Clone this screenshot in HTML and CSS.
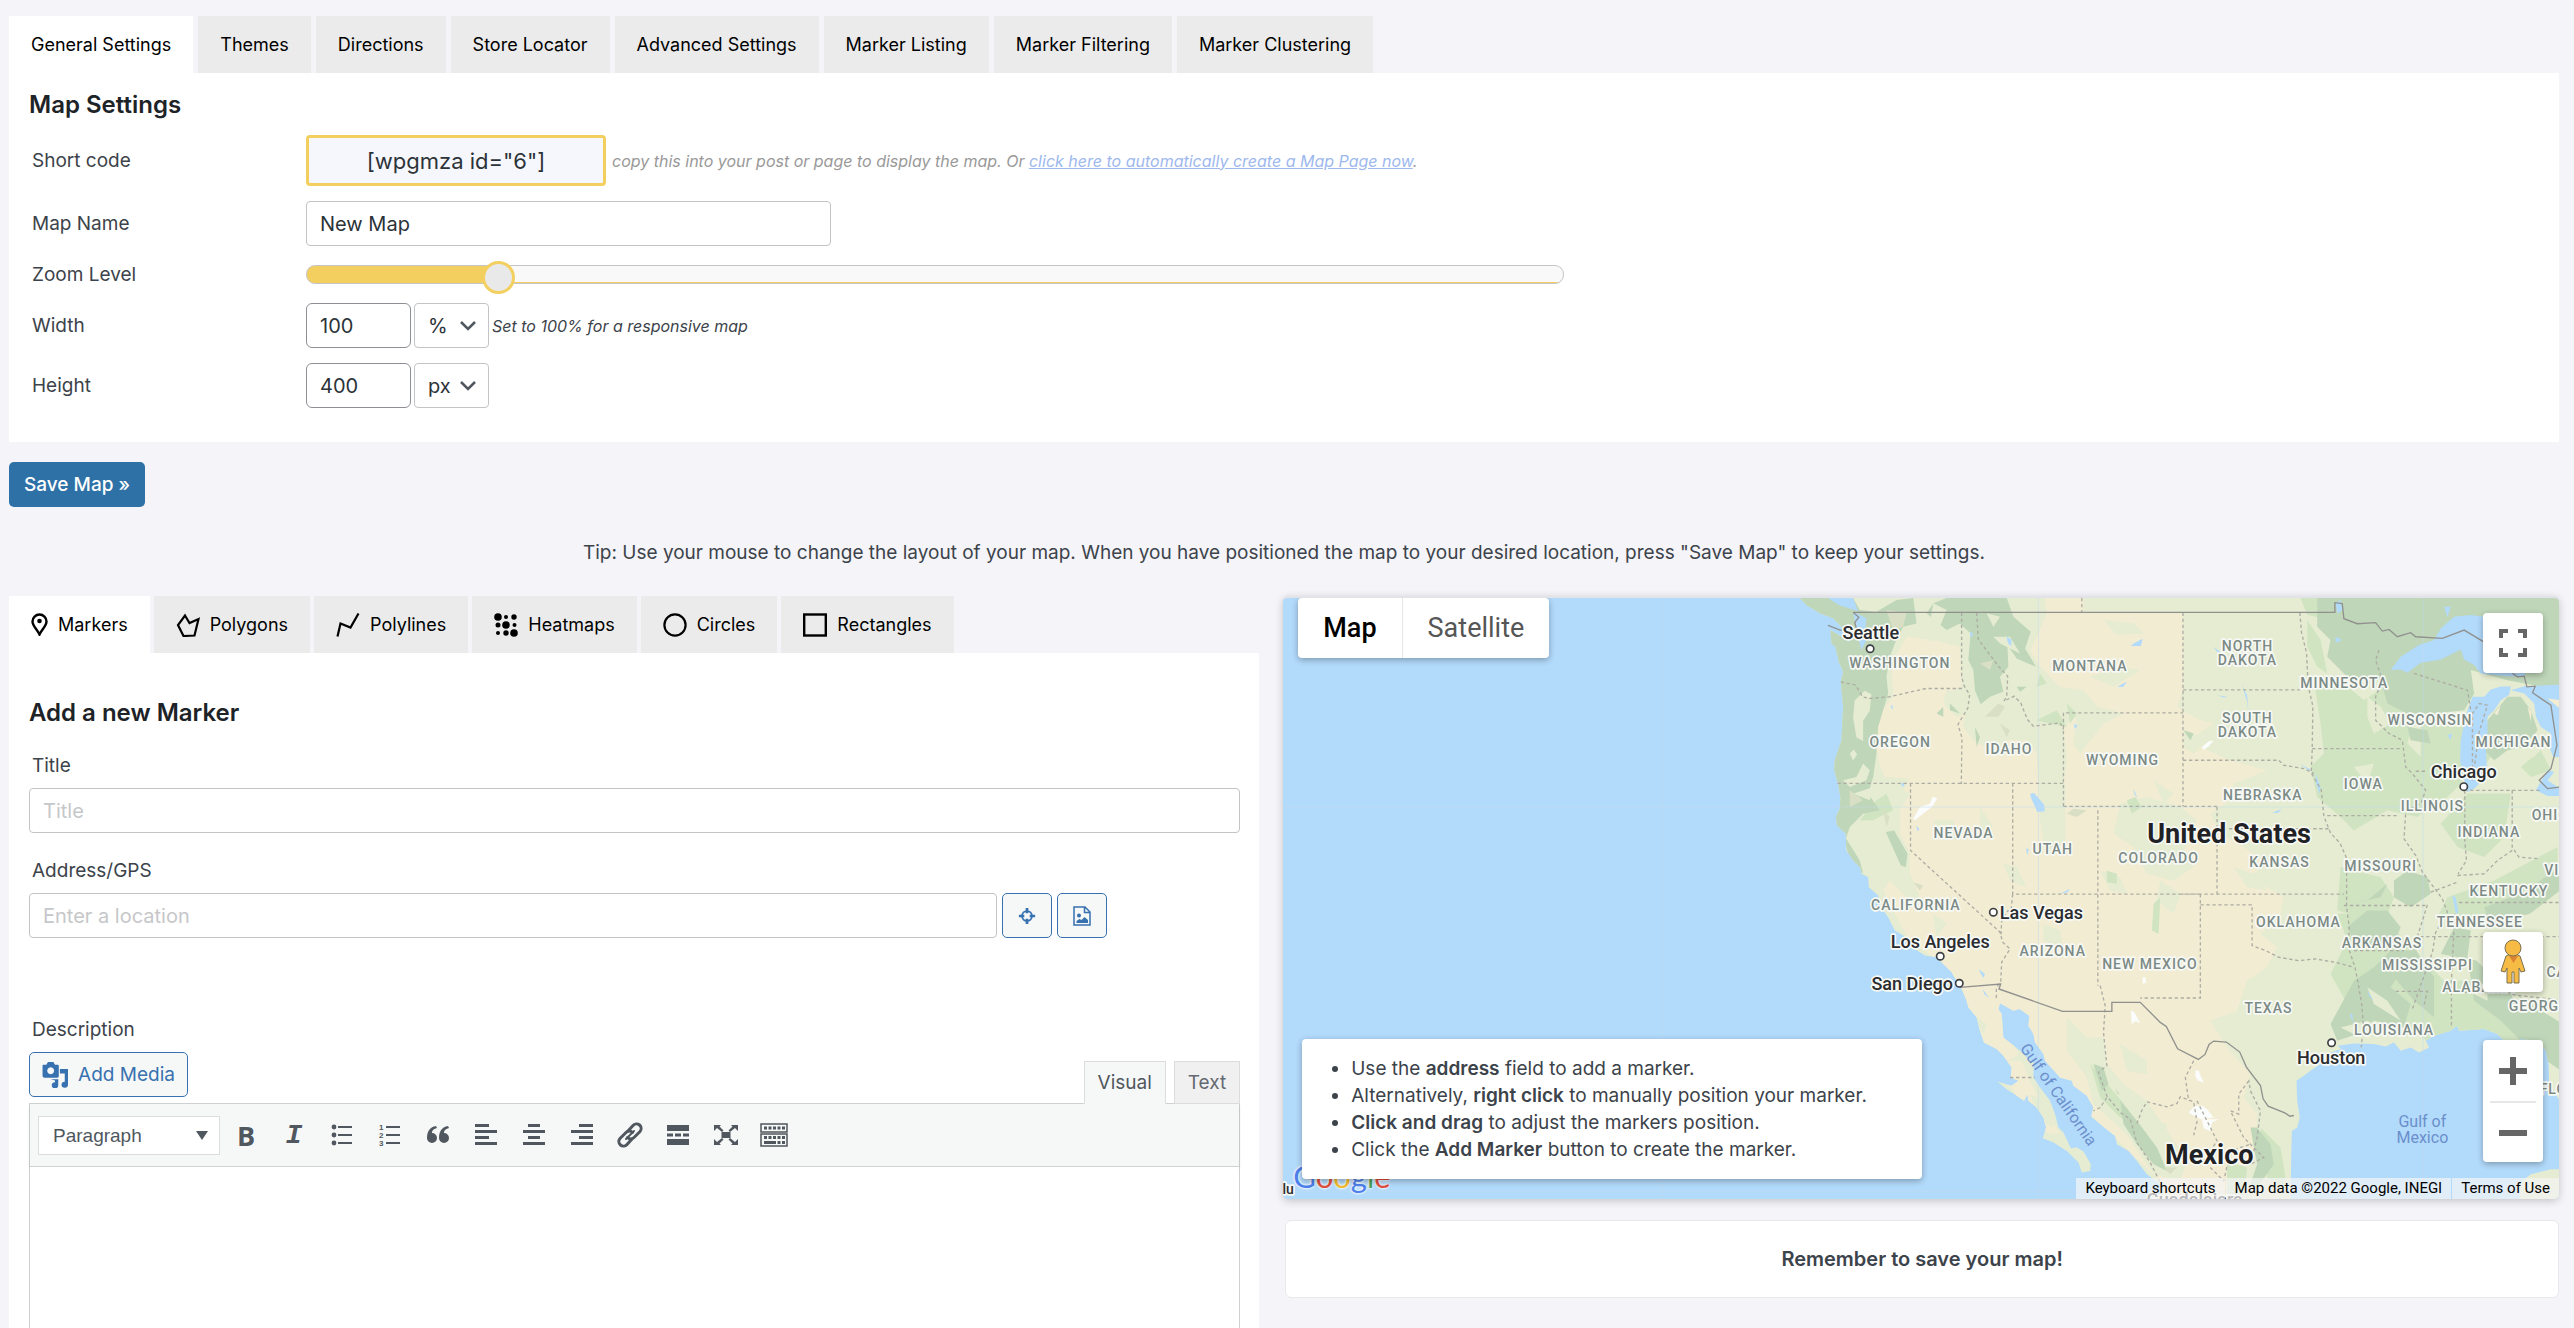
FILE: index.html
```html
<!DOCTYPE html>
<html lang="en">
<head>
<meta charset="utf-8">
<title>Edit Map</title>
<link rel="stylesheet" href="styles.css">
</head>
<body>
<div class="page">

<nav class="tabs" aria-label="Map settings sections">
  <button type="button" class="tab is-active">General Settings</button>
  <button type="button" class="tab">Themes</button>
  <button type="button" class="tab">Directions</button>
  <button type="button" class="tab">Store Locator</button>
  <button type="button" class="tab">Advanced Settings</button>
  <button type="button" class="tab">Marker Listing</button>
  <button type="button" class="tab">Marker Filtering</button>
  <button type="button" class="tab">Marker Clustering</button>
</nav>

<section class="panel settings">
  <h2>Map Settings</h2>
  <div class="row">
    <label for="shortcode">Short code</label>
    <div class="field">
      <input id="shortcode" class="shortcode" type="text" readonly value="[wpgmza id=&quot;6&quot;]">
      <p class="hint hint-light">copy this into your post or page to display the map. Or <a href="#">click here to automatically create a Map Page now</a>.</p>
    </div>
  </div>
  <div class="row">
    <label for="map-name">Map Name</label>
    <div class="field"><input id="map-name" class="text-input name-input" type="text" value="New Map"></div>
  </div>
  <div class="row">
    <label for="zoom">Zoom Level</label>
    <div class="field"><input id="zoom" class="slider" type="range" min="0" max="21" value="3"></div>
  </div>
  <div class="row">
    <label for="width">Width</label>
    <div class="field units">
      <input id="width" class="text-input size-input" type="text" value="100">
      <span class="select-wrap"><select class="unit" aria-label="Width unit"><option>%</option><option>px</option></select><svg class="chevron" viewBox="0 0 16 10"><path d="M1 1l7 7 7-7"/></svg></span>
      <p class="hint">Set to 100% for a responsive map</p>
    </div>
  </div>
  <div class="row">
    <label for="height">Height</label>
    <div class="field units">
      <input id="height" class="text-input size-input" type="text" value="400">
      <span class="select-wrap"><select class="unit" aria-label="Height unit"><option>px</option><option>%</option></select><svg class="chevron" viewBox="0 0 16 10"><path d="M1 1l7 7 7-7"/></svg></span>
    </div>
  </div>
</section>

<button type="button" class="save">Save Map »</button>

<p class="tip">Tip: Use your mouse to change the layout of your map. When you have positioned the map to your desired location, press "Save Map" to keep your settings.</p>

<div class="columns">
<div class="left">
  <nav class="tabs feature-tabs" aria-label="Feature types">
    <button type="button" class="tab is-active"><svg class="icon-pin" viewBox="0 0 17 23"><path d="M8.500 1.500a7 7 0 0 0-7 7c0 4.500 4.500 7.500 7 13 2.500-5.500 7-8.500 7-13a7 7 0 0 0-7-7z" fill="none" stroke="#000" stroke-width="2.400"/><circle cx="8.500" cy="8" r="2.300"/></svg>Markers</button>
    <button type="button" class="tab"><svg class="icon" viewBox="0 0 24 24"><path d="M9 2.500l4.500 7.500 9-4-4 16.500-11 .5L2 12z" fill="none" stroke="#000" stroke-width="2.200"/></svg>Polygons</button>
    <button type="button" class="tab"><svg class="icon" viewBox="0 0 24 24"><path d="M1.500 23.500l3-13 10 4L22.500 .5" fill="none" stroke="#000" stroke-width="2.200"/></svg>Polylines</button>
    <button type="button" class="tab"><svg class="icon" viewBox="0 0 24 24"><circle cx="4" cy="4" r="3.800"/><circle cx="12" cy="4" r="2"/><circle cx="20" cy="4" r="2.700"/><circle cx="4" cy="12" r="2.500"/><circle cx="12" cy="12" r="3.800"/><circle cx="20.500" cy="12" r="2"/><circle cx="4" cy="20" r="2"/><circle cx="12" cy="20" r="2.700"/><circle cx="20" cy="20" r="3.800"/></svg>Heatmaps</button>
    <button type="button" class="tab"><svg class="icon" viewBox="0 0 24 24"><circle cx="12" cy="12" r="10.600" fill="none" stroke="#000" stroke-width="2.200"/></svg>Circles</button>
    <button type="button" class="tab"><svg class="icon" viewBox="0 0 24 24"><rect x="1.200" y="1.500" width="21.600" height="21" fill="none" stroke="#000" stroke-width="2.400"/></svg>Rectangles</button>
  </nav>
  <section class="panel marker-form">
    <h2>Add a new Marker</h2>
    <div class="stack">
      <label for="title">Title</label>
      <input id="title" class="text-input" type="text" placeholder="Title">
    </div>
    <div class="stack">
      <label for="address">Address/GPS</label>
      <div class="address">
        <input id="address" class="text-input" type="text" placeholder="Enter a location">
        <button type="button" class="btn" aria-label="Use current location"><svg viewBox="0 0 20 20" width="18" height="18"><circle cx="10" cy="10" r="5.500" fill="none" stroke="currentColor" stroke-width="2"/><path d="M10 1v6M10 13v6M1 10h6M13 10h6" stroke="currentColor" stroke-width="3"/></svg></button>
        <button type="button" class="btn" aria-label="Read location from image"><svg viewBox="0 0 18 20" width="18" height="20"><path d="M1 1h11l5 5v13H1zM11.500 1v5.500H17" fill="none" stroke="currentColor" stroke-width="1.500"/><circle cx="6" cy="9.500" r="2" fill="currentColor"/><path d="M3.500 17v-2l3-2 2 1 3-3 3.500 3v3z" fill="currentColor"/></svg></button>
      </div>
    </div>
    <div class="stack description">
      <label for="description">Description</label>
      <div class="editor-head">
        <button type="button" class="btn media"><svg viewBox="0 0 24 24" width="26" height="26"><path fill="currentColor" fill-rule="evenodd" d="M1.500 2.500H4L5.500 0h5L12 2.500h2.500q1 0 1 1V13q0 1.500-1.500 1.500H2.500Q.500 14.500.500 13V3.500q0-1 1-1zM8 4.800a3.200 3.200 0 1 0 .01 0z"/><path fill="currentColor" d="M16.500 6.500H24V21a3 2.800 0 1 1-3-2.800v-7.700h-4.500zM8 16h7v5.500a3 2.800 0 1 1-3-2.800V17z"/></svg>Add Media</button>
        <div class="editor-tabs">
          <button type="button" class="etab is-active">Visual</button>
          <button type="button" class="etab">Text</button>
        </div>
      </div>
      <div class="editor">
        <div class="toolbar">
          <span class="select-wrap"><select class="format" aria-label="Text format"><option>Paragraph</option></select><svg class="triangle" viewBox="0 0 12 9"><path d="M0 0h12L6 9z"/></svg></span>
          <button type="button" class="tool tool-b" aria-label="Bold">B</button>
          <button type="button" class="tool tool-i" aria-label="Italic">I</button>
          <button type="button" class="tool" aria-label="Bulleted list"><svg viewBox="0 0 26 26"><circle cx="5" cy="5" r="2.400"/><circle cx="5" cy="13" r="2.400"/><circle cx="5" cy="21" r="2.400"/><path d="M9 4h14v2H9zM9 12h14v2H9zM9 20h14v2H9z"/></svg></button>
          <button type="button" class="tool" aria-label="Numbered list"><svg viewBox="0 0 26 26"><text x="2" y="8" font-size="8">1</text><text x="2" y="16" font-size="8">2</text><text x="2" y="24" font-size="8">3</text><path d="M9 4h14v2H9zM9 12h14v2H9zM9 20h14v2H9z"/></svg></button>
          <button type="button" class="tool" aria-label="Blockquote"><svg viewBox="0 0 26 26"><path d="M11 4C5 5 2 9 2 16a5 5 0 1 0 5-5c0-2 1-4 5-5zM23 4c-6 1-9 5-9 12a5 5 0 1 0 5-5c0-2 1-4 5-5z"/></svg></button>
          <button type="button" class="tool" aria-label="Align left"><svg viewBox="0 0 26 26"><path d="M2 2h14v3H2zM2 8h22v3H2zM2 14h14v3H2zM2 20h22v3H2z"/></svg></button>
          <button type="button" class="tool" aria-label="Align center"><svg viewBox="0 0 26 26"><path d="M7 2h12v3H7zM2 8h22v3H2zM7 14h12v3H7zM2 20h22v3H2z"/></svg></button>
          <button type="button" class="tool" aria-label="Align right"><svg viewBox="0 0 26 26"><path d="M10 2h14v3H10zM2 8h22v3H2zM10 14h14v3H10zM2 20h22v3H2z"/></svg></button>
          <button type="button" class="tool" aria-label="Insert link"><svg viewBox="0 0 26 26"><g fill="none" stroke="#50575e" stroke-width="3" stroke-linecap="round"><path d="M15 17l-5 5.500a4.500 4.500 0 0 1-7-6l6-6a4.500 4.500 0 0 1 6.500 0"/><path d="M11 9l5-5.500a4.500 4.500 0 0 1 7 6l-6 6a4.500 4.500 0 0 1-6.500 0"/><path d="M9 17l8-8" stroke-width="2"/></g></svg></button>
          <button type="button" class="tool" aria-label="Read more tag"><svg viewBox="0 0 26 26"><path d="M2 3h22v6H2zM2 17h22v6H2zM2 11.500h6v3H2zM10 11.500h6v3h-6zM18 11.500h6v3h-6z"/></svg></button>
          <button type="button" class="tool" aria-label="Fullscreen"><svg viewBox="0 0 26 26"><path d="M8.500 10h9v6h-9zM1 3h7L6.500 4.500l4 4-1.500 1.500-5-4L1 9zM25 3h-7l1.500 1.500-4 4 1.500 1.500 5-4L25 9zM1 23h7l-1.500-1.500 4-4L9 16l-5 4-3-3zM25 23h-7l1.500-1.500-4-4L17 16l5 4 3-3z"/></svg></button>
          <button type="button" class="tool" aria-label="Toolbar toggle"><svg viewBox="0 0 28 26" class="wide"><path fill="none" stroke="#50575e" stroke-width="1.500" d="M1 2h26v8H1zM1 12h26v12H1z"/><path fill="none" stroke="#50575e" stroke-width="3" stroke-dasharray="3 1.500" d="M4 6h21M4 15.500h21"/><path fill="none" stroke="#50575e" stroke-width="3" d="M4 20.500h12M17.500 20.500h3M22 20.500h3"/></svg></button>
        </div>
        <textarea id="description" class="editor-body"></textarea>
      </div>
    </div>
  </section>
</div>

<div class="right">
  <div class="map">
    <svg class="map-art" viewBox="-1551 54 3828 1800" preserveAspectRatio="xMidYMid slice">
      <defs>
        <clipPath id="land"><path id="land-shape" d="M0 54L20 75 60 100 100 115 125 140 160 170 150 185 92 150 95 190 107 200 117 245 130 275 123 305 130 380 125 480 105 540 103 570 115 610 122 650 120 685 108 710 112 735 138 760 140 810 160 840 182 862 185 880 205 890 207 920 235 945 240 975 265 1010 285 1050 310 1065 350 1108 375 1125 410 1130 430 1150 455 1175 470 1200 485 1225 500 1260 505 1280 530 1310 540 1350 552 1385 590 1405 610 1425 635 1460 632 1490 655 1500 635 1515 592 1502 620 1525 650 1545 672 1560 682 1540 685 1560 710 1580 730 1610 738 1640 728 1672 760 1685 800 1710 835 1745 845 1775 870 1770 872 1750 850 1712 830 1700 812 1702 790 1655 775 1640 765 1600 750 1560 720 1520 700 1490 700 1445 680 1430 660 1410 610 1370 605 1300 595 1285 600 1268 640 1290 658 1285 688 1305 685 1335 700 1360 705 1385 730 1420 735 1440 780 1490 815 1500 820 1515 860 1545 880 1580 873 1608 900 1630 945 1665 950 1690 985 1710 1010 1740 1040 1780 1080 1810 1090 1860H1470L1472 1740 1474 1650 1490 1640 1498 1610 1490 1560 1488 1500 1510 1485 1530 1470 1560 1450 1590 1415 1622 1405 1612 1395 1660 1388 1720 1390 1755 1397 1780 1385 1800 1410 1830 1400 1855 1415 1885 1400 1875 1380 1900 1365 1950 1350 1968 1335 1975 1350 2050 1345 2090 1360 2120 1390 2160 1375 2210 1380 2235 1410 2243 1450 2245 1510 2277 1560V54z"/></clipPath>
      </defs>
      <use href="#land-shape" class="land"/>
      <path class="land" d="M2150 1810l40-30 60-15h30v95h-120z"/>
      <g clip-path="url(#land)">
        <path class="beige" d="M735 54L850 54 850 95 1148 100 1150 330 1130 380 1200 420 1240 430 1180 470 1200 500 1290 540 1400 570 1300 610 1290 660 1230 700 1260 760 1330 800 1400 850 1330 900 1400 920 1450 950 1440 1000 1380 1060 1430 1100 1400 1160 1340 1200 1310 1290 1230 1320 1280 1400 1350 1480 1330 1550 1370 1600 1370 1700 1320 1760 1340 1860 1100 1860 1080 1800 870 1600 600 1300 700 1520 780 1660 720 1650 540 1380 480 1220 400 1130 330 1080 290 1010 250 930 270 900 330 960 360 950 330 880 330 820 300 760 300 690 330 640 260 600 240 560 225 480 240 400 280 350 275 250 320 170 400 180 480 200 485 320 440 340 500 350 490 440 520 480 590 520 620 480 680 480 710 520 715 600 790 610 800 540 790 440 840 400 900 390 850 330 780 320 720 260 690 210 720 150 740 100z"/>
        <g class="light">
          <path d="M340 54l100 0 20 100-60 30-60-20zM440 330l70 10 20 50-60 20-40-40zM260 590l70 5-30 50-60 20zM715 600l80 10 0 170-60 40-15-100zM830 400l60-20 80 20-60 30-70 90-20-30zM910 120l90 10 30 30-80 5zM870 290l90-30 60 10-80 50zM960 670l80-20 100 30 50 40-40 90 30 50-60 40-80-20-40-80-60-40zM900 870l60 20 20 50-50-10zM1080 900l60 40-20 60-50-40zM800 1310l60 60 50 0 10 80 50 60 70 50 60 90 60 90-20 60-80-20-80-120-100-90-20-80-60-80zM1060 600l60 40-30 30zM960 1390l80 50 0 40-60-10zM400 1000l40 30-30 40zM540 680l40 60-40 20zM400 720l60 0 20 60-50-10zM610 850l40 10 30 60-50-20zM1010 1600l90 30 0 60zM730 1030l50 20 10 60-60-30zM500 1290l60 40-10 30zM620 1440l60-30 10 30zM690 1540l50 20 20 80-40-20zM1300 860l60 20 40 50-60-10zM1150 450l70 30-40 40-30-20z"/>
        </g>
        <g class="mid">
          <path d="M1540 300l90 10 60 50 60-40 40 30 50 70-20 70 60 60-30 50 60 60-60 50-90-20-100 60-40-40-70-60-20-90 40-40-10-90zM1500 54h100v70l-80-20zM1860 430l110 10 60-20-20 90-30 100-60 60-80-30 20-90zM2000 640h130l-20 130-60 60-80-30-50-70zM1620 860l120 30 40 60-30 80-140-40zM2080 900l190-100v130l-180 100-180-20 30-60zM1610 1000l140 0 60 80 60 60 60 60h180l60 200-290-20-90-60-150-50-50-90 50-100zM1320 860l-10 30zM180 720l50-60 30-20 20 50-60 30zM710 420l60-30 30 50-50-10zM870 1450l60 70 50 60 40 60-60-30-60-60zM1280 1740l60 20-10 90-50-10zM1380 1640l60 60 20 120-60-30zM2050 450l40 50-40 60-10-50zM720 280l20 30-30 10zM800 370l30 30-20 30zM980 660l25-10 20 30-30 20zM1060 970l20-20-5 110-20-10zM920 870l30 10 0 30-30-5zM1520 120l40 60 20 100-30-20-30-60zM2160 560l60-50 30 60-60 20z"/>
        </g>
        <g class="dark">
          <path d="M0 54H160L180 90 230 95 290 60 340 54 350 130 310 140 285 190 270 230 260 290 265 340 235 440 230 520 220 590 205 640 240 690 190 700 150 740 130 800 100 720 90 600V400L60 200z"/>
          <path d="M440 54H620L640 110 692 155 675 205 708 260 650 235 622 195 625 260 600 290 610 335 570 350 542 372 525 330 520 270 505 240 512 160 480 130 440 150 380 100 400 70z"/>
          <path d="M2277 54H1550V140L1590 180 1580 230 1640 290 1740 300 1760 370 1820 400 1900 400 1990 390 2020 340 2010 270 2120 300 2277 330z"/>
          <path d="M2060 420l60-70 40 0 30 40 20 60-40 50-50 10-40 30-30-30z"/>
          <path d="M258 755l25-5 40 70-5 40-15-5zM180 1005l-30-80zM130 760l50 80 10 40-40-40zM1650 970l90-20 20-40-60 50zM1780 900l40-30 60 20 10 50-60 40-50-30zM1640 1040l60-50 60 0 40 50-20 50-60 10-60-20zM1660 1200l60-40 50-50 80 0-40 50-40 60 60 50-20 70-90-20-50 40-60 20-20-50zM1780 1190l60-90 60 90 0 120-60-50zM1920 1120l40-80 50 10-10 80 20 130 80 60 80 80 100 70 57 100V1360l-100-60-150-100-60-60zM2050 980l110-40 117-80v70l-90 70-120 30zM1350 1640l20 0 40 50 10 60-50 70-20-10 20-60zM880 1450l30 10 15 50-20 20zM960 1560l50 60 60 80 30 70-40-20-50-60-40-60zM410 400l20-20 0 30zM450 370l30 30-30-10zM525 440l15 30-10 30zM650 320l30 0-20 15zM1150 450l30 10-10 20zM1820 440l60 10 10 40-60-10z"/>
        </g>
        <g class="light">
          <path d="M165 360l30-28 20 10-5 50-20 30 0 60-20-10-10-60zM150 520l12-12 10 15-12 18zM130 600l40-10 20-40 20 20-10 30-50 20zM160 640l60-20-10 40zM560 100l40 10-20 30zM580 170l50 0 30 50-60-30zM400 70l40 20-20 50-30-10zM1700 350l40 30 30 50-50 30-20-50zM1850 1000l60 20-20 50-50 0zM1700 1220l60 40 40 60-80-50zM2020 1210l40 0 0 50-40-20zM1620 1340l80-20 60 30-80 20zM2120 1220l60 50-30 10zM1870 720l50 20-20 60-60-30zM2180 470l50 20-30 40-60 20zM1660 560l60-10-20 60z"/>
        </g>
        <g class="olive">
          <path d="M260 90l60 10-10 40-30 10zM540 250l40-10-10 30zM555 410l40-40 20 10-20 30zM800 700l20-15 40 5-30 20zM600 430l30 20-10 20zM340 905l30 10-10 15zM950 1540l-5-20 15 20zM1090 1760l40 0-20 20zM250 690l20 20-10 30zM150 630l40 30-40 20z"/>
        </g>
      </g>
      <g class="water">
        <path d="M85 54l30 20 60 20-15-40zM160 95l40 20-5 40-25-10zM175 170l25 10-15 30zM690 640l12-2 30 35 2 20-22 2-18-40zM620 170l14 8 0 20-10-8zM510 155l10 5-8 14zM1000 190l27-14-5 22-30 0zM950 320l30-15-10 15zM822 430l10 8-8 8zM1000 625l12 30-10-15zM535 1165l20 15-5 12zM548 1225l20 28-15-12zM678 805l8 0-4 20zM272 378l6-4 0 16zM305 608h8v10h-8zM348 735l10 10-4 8zM780 940l30-15-8 10zM1240 200l25 20-15-5zM1325 315l15 30 5 60-5-40zM1250 345l30 5-10 2zM1495 550l40 20-10 0zM1545 580l15 40-3 20-10-30zM1415 698l28-12-10 12zM1605 70l15-10 5 30-14 10zM1605 170l20 10-20 8zM1940 110l-10-30 20 0zM1955 945l10 5 8 45-8 5zM1700 1230l20 30-15-15zM1680 380l0 15zM1648 1300l8 0 0 25zM1940 465l14-5-4 18z"/>
        <path d="M1770 270l30-40 55-35 45-15 20-35 40-35 50-5 60 8 90 30 30 100-20 45-50 0-80-8-20-25-30-17-10-30-60 30-60 10-40 30-20-10z"/>
        <path d="M2015 350h35l20-22 30-9 30 0-5 25-25 16-20 30-20 20v50l-5 40 3 60-13 40-25 25-20 10-10-35-12-60 2-60 10-50 10-40z"/>
        <path d="M2130 330l40-12 107-4v216h-20l-12-30 5-40-30-20-15-30-5-40-30-30zM2205 630l35-60 20 5-20 25 37 25v22h-37z"/>
      </g>
      <path class="beige" d="M2240 355l37 5v25zM2080 400l20-25-10 30zM2180 380l12 15-2 30z"/>
      <path class="salt" d="M340 715l20-35 30-10 8-20 14 4-14 24-30 24-24 18zM1205 500l20-17 15-2-15 18-16 10zM992 1290l10 4 18 34-14-6-12 8zM1184 1480l12-12 0 30-8-5zM1184 1470l10 0 16 35-18-6zM1165 1595l20-20 20 0 15 10 20 25-40 5zM1205 1615l50 0-20 10-5 25-20-8zM1027 1190l8 0 3 15-10 5z"/>

      <path class="graticule" d="M-1551 680H2277M-1551 1832H2277M715 54V1854M-412 54V1854M1867 54V1854"/>

      <g class="state">
        <path d="M485 98V290l8 28 16 25-5 40-30 50 12 40-2 138M530 98l5 80 60 80 28 30-3 60-8 15 30-15 20 20 20 50 18 20 80-10 10 20M123 305l45 10 20 35 20 5 60-5 110-25h110M113 609H790M332 609V810L600 1055l8 30 22 20-25 40-3 60-13 15 0 40M638 609V941H1200M638 941l-5 50-10 0-18 30-2 40M790 678V398H1148M790 678H1250M1148 98V678M845 54V98M893 690V1215M1148 329H1498M1148 540H1435l15 15 60 10 30 15M1250 680V941M1250 745H1590M1140 941H1630M1200 941V1252H1020M1200 973H1355V1095l40 15 40 20 60 10 50-5 60 10 55 15M1498 98l5 60 15 60 5 100 14 60-2 130-3 70 30 50 8 80 20 50 28 30 20 45V980l8 60-3 60 20 60 10 50 10 60 5 60-6 70M1535 505H1805M1735 210l-10 30 20 60-20 50 0 70 40 40 40 20 10 80 20 20 40 50-15 40-45 25-5 80 35 50 20 50 60 80 15 40-35 60-10 60-60 170M1580 706H1790M1630 975H1875M1845 573h35M1840 280l160 50 10 60M1990 630H2220M1992 630l0 150 5 60-25 40M2134 630V800l20 30 60 5M1970 885l80-5 40-40 44-30M1890 935l80-30M1975 966H2277M1880 973L1850 1068H2277M1660 1110h150M1962 1000l-10 200 0 140M1785 1232h95l-10 40M1990 1235h135M2090 1068l40 170 10 5 137 15M2015 600l0-200 20-30 25 5-25 80z"/>
        <path d="M900 1215l15 60-5 80 10 100-25 20 25 70 40 50 30 20 20 70 40 60 30 60M630 1490h75M920 1550l-20 30-20 10M1010 1628l15-40 15-25 60 15 30-10 10-20 40 15 10 60-10 40M1180 1440l-25 50 10 70M1345 1500l-30 40 0 60-25-10 40 80 60 60-40 20 20-80 10-80-30-60zM1190 1560l60 120-40 60 60 60 20-90 60-20"/>
      </g>
      <g class="nation">
        <path d="M160 97H1603V68l22 3 5 45 40 15 55-3 20 25 20-5 25 22 40-12 15 12 80 5 65-25 100 60M2135 280l15 10 20-2 8 32 25-2-8 20 55 37 18 120-18 70-35 35 25 25 37-5M85 136l36 14 30-2M160 97l17 15-12 15 12 45"/>
        <path d="M480 1220l122-10-5 15 190 67H935v-27h85l60 60 18 12 34 67 62 32 20-15 12-30 14-10 38 3 40 30 20 45 42 55 8 40 15 22 50 20 15 10 12-2"/>
      </g>

      <g class="city">
        <circle cx="211" cy="206" r="11"/><circle cx="580" cy="995" r="11"/><circle cx="421" cy="1127" r="11"/><circle cx="478" cy="1208" r="11"/><circle cx="1989" cy="619" r="11"/><circle cx="1593" cy="1386" r="11"/>
        <text x="213" y="178">Seattle</text><text x="724" y="1014">Las Vegas</text><text x="421" y="1102">Los Angeles</text><text x="337" y="1229">San Diego</text><text x="1989" y="594">Chicago</text><text x="1592" y="1451">Houston</text><text class="edge" x="-1549" y="1840">lu</text><text x="1183" y="1874">Guadalajara</text>
      </g>
      <g class="country"><text x="1286" y="787">United States</text><text x="1227" y="1748">Mexico</text></g>
      <g class="region">
        <text x="300" y="265">WASHINGTON</text><text x="869" y="274">MONTANA</text><text x="301" y="499">OREGON</text><text x="627" y="521">IDAHO</text><text x="967" y="555">WYOMING</text><text x="491" y="773">NEVADA</text><text x="758" y="821">UTAH</text><text x="1075" y="847">COLORADO</text><text x="348" y="989">CALIFORNIA</text><text x="758" y="1126">ARIZONA</text><text x="1049" y="1165">NEW MEXICO</text>
        <text x="1341" y="214">NORTH</text><text x="1341" y="256">DAKOTA</text><text x="1341" y="429">SOUTH</text><text x="1341" y="470">DAKOTA</text><text x="1631" y="325">MINNESOTA</text><text x="1888" y="433">WISCONSIN</text><text x="2138" y="499">MICHIGAN</text><text x="1688" y="625">IOWA</text><text x="1387" y="658">NEBRASKA</text><text x="1895" y="692">ILLINOIS</text><text x="2248" y="719">OHIO</text><text x="2064" y="771">INDIANA</text><text x="1437" y="859">KANSAS</text><text x="1740" y="873">MISSOURI</text><text x="2330" y="883">VIRGINIA</text><text x="2124" y="946">KENTUCKY</text><text x="1494" y="1039">OKLAHOMA</text><text x="2037" y="1039">TENNESSEE</text><text x="1744" y="1102">ARKANSAS</text><text x="1880" y="1168">MISSISSIPPI</text><text x="2034" y="1235">ALABAMA</text><text x="2222" y="1291">GEORGIA</text><text x="1404" y="1298">TEXAS</text><text x="1780" y="1364">LOUISIANA</text><text x="2310" y="1539">FLORIDA</text><text x="2350" y="1190">CAROLINA</text>
      </g>
      <g class="sea"><text x="1865" y="1637">Gulf of</text><text x="1865" y="1685">Mexico</text><text transform="translate(762 1550) rotate(55)">Gulf of California</text></g>
    </svg>

    <div class="google" aria-label="Google"><span class="g-blue">G</span><span class="g-red">o</span><span class="g-yellow">o</span><span class="g-blue">g</span><span class="g-green">l</span><span class="g-red">e</span></div>

    <div class="map-type">
      <button type="button" class="is-active">Map</button>
      <button type="button">Satellite</button>
    </div>

    <ul class="help">
      <li>Use the <b>address</b> field to add a marker.</li>
      <li>Alternatively, <b>right click</b> to manually position your marker.</li>
      <li><b>Click and drag</b> to adjust the markers position.</li>
      <li>Click the <b>Add Marker</b> button to create the marker.</li>
    </ul>

    <button type="button" class="control fullscreen" aria-label="Toggle fullscreen"><svg viewBox="0 0 28 28" width="28" height="28"><path d="M0 9V0h9v4H4v5zM19 0h9v9h-4V4h-5zM28 19v9h-9v-4h5v-5zM9 28H0v-9h4v5h5z" fill="#666"/></svg></button>
    <button type="button" class="control pegman" aria-label="Street View"><svg viewBox="0 0 26 46" width="26" height="46"><path d="M6 17q7-4 14 0l5 15-4 1-2-4v15h-5V33h-2v11H7V29l-2 4-4-1z" fill="#f5bb45" stroke="#7a7051" stroke-width="1"/><path d="M9 17h9l-4.500 7z" fill="#dd8433"/><circle cx="13" cy="9" r="8" fill="#f5bb45" stroke="#7a7051" stroke-width="1"/></svg></button>
    <div class="zoom-control">
      <button type="button" aria-label="Zoom in"><svg viewBox="0 0 28 28" width="28" height="28"><path d="M11 0h6v11h11v6H17v11h-6V17H0v-6h11z" fill="#666"/></svg></button>
      <button type="button" aria-label="Zoom out"><svg viewBox="0 0 28 28" width="28" height="28"><path d="M0 11h28v6H0z" fill="#666"/></svg></button>
    </div>

    <div class="attribution">
      <button type="button">Keyboard shortcuts</button>
      <span>Map data ©2022 Google, INEGI</span>
      <a href="#">Terms of Use</a>
    </div>
  </div>
  <p class="reminder">Remember to save your map!</p>
</div>
</div>
</div>
</body>
</html>
```
FILE: styles.css
```css
* { box-sizing: border-box; }

body {
  margin: 0;
  background: #f4f4f9;
  color: #3c434a;
  font: 19px/24px Inter, "Liberation Sans", sans-serif;
}

button, input, select, textarea { font: inherit; color: inherit; margin: 0; }
button { cursor: pointer; }
h2, p, ul { margin: 0; }
h2 { color: #1d2327; font-size: 24px; line-height: 30px; font-weight: 600; }
svg { display: block; }

.page { height: 100vh; overflow: hidden; padding: 16px 15px 0 9px; }

/* Tabs */
.tabs { display: flex; gap: 5px; }
.feature-tabs { gap: 4px; }
.tab {
  display: flex;
  align-items: center;
  gap: 10px;
  height: 57px;
  padding: 0 22px;
  border: 0;
  background: #ebebeb;
  color: #000;
  font-size: 18px;
}
.tab.is-active { background: #fff; }
.icon { width: 24px; height: 24px; }
.icon-pin { width: 17px; height: 23px; }

.panel { background: #fff; }

/* General settings */
.settings { display: flex; flex-direction: column; gap: 15px; padding: 17px 23px 34px; }
.settings h2 { margin-left: -3px; }
.row { display: grid; grid-template-columns: 274px minmax(0, 1fr); align-items: center; min-height: 27px; }
.field { display: flex; align-items: center; gap: 6px; }
.field.units { gap: 3px; }

.text-input {
  height: 45px;
  padding: 0 13px;
  border: 1px solid #c3c4c7;
  border-radius: 4px;
  background: #fff;
  color: #2c3338;
  font-size: 20px;
}
.text-input::placeholder { color: #c6c7c9; }
.name-input { width: 525px; }
.size-input { width: 105px; border-color: #8c8f94; border-radius: 6px; }
.shortcode {
  width: 300px;
  height: 51px;
  border: 3px solid #f3cf60;
  border-radius: 4px;
  background: #f6f7fc;
  color: #2c3338;
  font-size: 22px;
  text-align: center;
}
.hint { font-size: 16px; font-style: italic; }
.hint-light { color: #999; }
.hint-light a { color: #9db8ee; }

.select-wrap { display: grid; align-items: center; }
.select-wrap > * { grid-area: 1 / 1; }
.select-wrap svg { justify-self: end; pointer-events: none; }
select { appearance: none; background: #fff; }
.unit { width: 75px; height: 45px; padding: 0 13px; border: 1px solid #c3c4c7; border-radius: 4px; color: #2c3338; font-size: 20px; }
.chevron { width: 16px; height: 10px; margin-right: 13px; fill: none; stroke: #50575e; stroke-width: 2.500; }

.slider { appearance: none; width: 1258px; height: 27px; background: none; }
.slider::-webkit-slider-runnable-track {
  height: 19px;
  border: 1px solid #c5c5c5;
  border-radius: 9px;
  background: linear-gradient(90deg, #f3cf60 195px, transparent 195px), linear-gradient(#f9f9f9 16px, #f3cf60 16px);
}
.slider::-webkit-slider-thumb {
  appearance: none;
  width: 33px;
  height: 33px;
  margin-top: -5px;
  border: 3px solid #f3cf60;
  border-radius: 50%;
  background: #e9e9e9;
}

.save {
  height: 45px;
  margin-top: 20px;
  padding: 0 15px;
  border: 0;
  border-radius: 5px;
  background: #2e71a6;
  color: #fff;
  font-weight: 500;
}
.tip { margin: 34px 0 31px; text-align: center; }

.columns { display: grid; grid-template-columns: 49fr 50fr; gap: 24px; }
.columns > * { min-width: 0; }

/* Marker form */
.marker-form { padding: 45px 19px 40px 20px; }
.marker-form h2 { margin-bottom: 26px; }
.stack { display: grid; gap: 10px; margin-bottom: 26px; }
.stack label { padding-left: 3px; }
.address { display: flex; gap: 5px; padding-right: 133px; }
.address input { flex: 1; min-width: 0; }
.btn {
  display: flex;
  align-items: center;
  justify-content: center;
  width: 50px;
  height: 45px;
  padding: 0;
  border: 1px solid #3771b0;
  border-radius: 5px;
  background: #f6f7f7;
  color: #3771b0;
}
.btn.media { width: 159px; gap: 10px; }
.description { margin: 80px 0 0; }
.editor-head { display: flex; justify-content: space-between; align-items: flex-start; height: 51px; }
.editor-tabs { display: flex; gap: 8px; align-self: flex-end; z-index: 1; margin-bottom: -1px; }
.etab { height: 43px; padding: 0 13px; border: 1px solid #dcdcde; background: #f0f0f1; color: #646970; }
.etab.is-active { border-bottom-color: #f6f7f7; background: #f6f7f7; color: #50575e; }
.editor { margin-top: -10px; border: 1px solid #d0d1d3; }
.toolbar {
  display: flex;
  align-items: center;
  height: 63px;
  padding: 0 8px;
  border-bottom: 1px solid #d0d1d3;
  background: #f6f7f7;
  box-shadow: 0 2px 3px rgba(0, 0, 0, .12);
}
.format { width: 182px; height: 39px; margin-right: 2px; padding: 0 14px; border: 1px solid #dcdcde; color: #50575e; font: 19px "Liberation Sans", Arial, sans-serif; }
.triangle { width: 12px; height: 9px; margin-right: 14px; fill: #50575e; }
.tool { display: grid; place-items: center; width: 48px; height: 39px; padding: 0; border: 0; background: none; color: #50575e; fill: #50575e; }
.tool svg { width: 26px; height: 26px; font: 700 8px "Liberation Sans", sans-serif; }
.tool svg.wide { width: 28px; }
.tool-b { font: 700 27px "Open Sans", sans-serif; }
.tool-i { font: italic 700 28px "Liberation Mono", monospace; }
.editor-body { display: block; width: 100%; height: 300px; border: 0; background: #fff; resize: none; }

/* Map preview */
.map {
  position: relative;
  height: 603px;
  overflow: hidden;
  border-top: 2px solid #e2e3e8;
  border-radius: 5px;
  box-shadow: 0 2px 8px rgba(0, 0, 0, .2);
  background: #b2dafb;
  font-family: Roboto, sans-serif;
}
.map-art { width: 100%; height: 100%; font-family: Roboto, sans-serif; text-anchor: middle; }
.map-art .land, .map-art .light { fill: #e5ecd1; }
.beige { fill: #f2ecd3; }
.mid { fill: #d0e4c2; }
.dark { fill: #bfd6b9; }
.olive { fill: #d8dfc4; }
.water { fill: #b2dafb; }
.salt { fill: #fbfdfd; }
.graticule { fill: none; stroke: #c3dcf0; stroke-width: 3; opacity: .5; }
.state { fill: none; stroke: #adada3; stroke-width: 4; stroke-dasharray: 10 8; }
.nation { fill: none; stroke: #90918e; stroke-width: 4; }
.map-art text { paint-order: stroke; stroke: #f7f9f5; stroke-width: 10px; stroke-linejoin: round; }
.city { font-size: 54px; font-weight: 500; fill: #2a2c30; }
.city circle { fill: #fff; stroke: #3c3f43; stroke-width: 5; }
.city .edge { font-size: 42px; text-anchor: start; }
.country { font-size: 81px; font-weight: 700; fill: #1f2124; }
.region { font-size: 42px; font-weight: 500; letter-spacing: 3px; fill: #7c8a86; }
.sea { font-size: 48px; fill: #6b8fcb; }
.map-art .sea text { stroke: none; }

.google { position: absolute; left: 10px; bottom: 3px; font: 31px/40px Lato, sans-serif; text-shadow: 0 0 3px #fff, 0 0 3px #fff; }
.g-blue { color: #4d80ec; }
.g-red { color: #e04f3f; }
.g-yellow { color: #f4bd2f; }
.g-green { color: #4ca456; }

.map-type, .help, .control, .zoom-control { position: absolute; background: #fff; border-radius: 4px; box-shadow: 0 2px 6px rgba(0, 0, 0, .3); }
.map-type { top: 0; left: 15px; display: flex; }
.map-type button { height: 60px; padding: 0 25px; border: 0; background: none; color: #565656; font-size: 27px; }
.map-type .is-active { border-right: 1px solid #e6e6e6; color: #000; font-weight: 500; }
.help { left: 19px; bottom: 20px; width: 620px; padding: 16px 20px 16px 49px; font: 19px/27px Inter, sans-serif; }
.help b { font-weight: 600; }
.control { display: grid; place-items: center; right: 16px; width: 60px; height: 60px; padding: 0; border: 0; }
.fullscreen { top: 15px; }
.pegman { top: 334px; }
.zoom-control { right: 16px; bottom: 37px; width: 60px; padding: 0 7px; }
.zoom-control button { display: grid; place-items: center; width: 46px; height: 61px; padding: 0; border: 0; background: none; }
.zoom-control button + button { border-top: 2px solid #e6e6e6; }
.attribution { position: absolute; right: 0; bottom: 0; display: flex; gap: 1px; color: #000; font-size: 15px; line-height: 21px; }
.attribution > * { padding: 0 9px; border: 0; background: rgba(245, 245, 245, .7); color: #000; text-decoration: none; }

.reminder {
  margin: 21px 0 0 2px;
  padding: 26px;
  border: 1px solid #e9e9ec;
  border-radius: 6px;
  background: #fff;
  font-size: 20px;
  font-weight: 600;
  text-align: center;
}
```
